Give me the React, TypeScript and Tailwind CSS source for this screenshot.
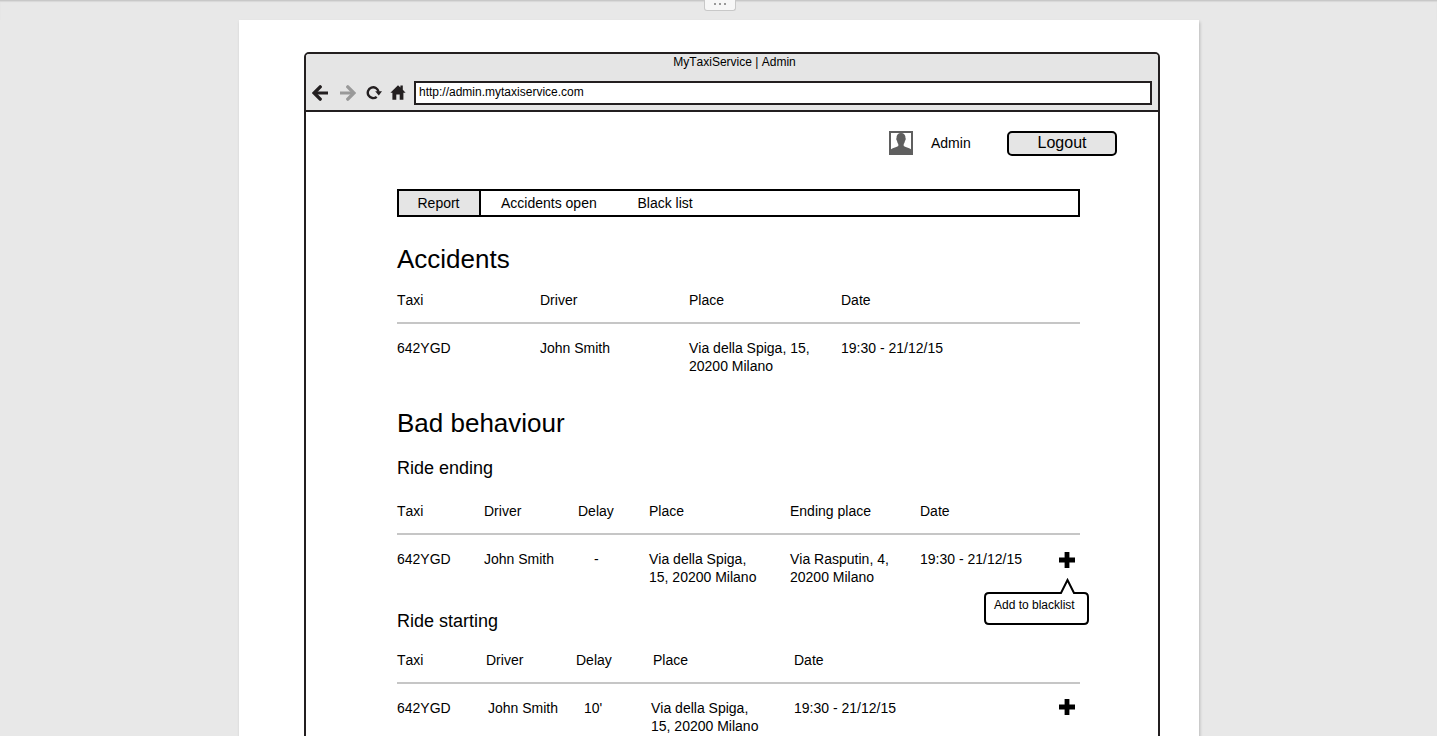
import React from "react";

function BackArrow({ className }: { className: string }) {
  return (
    <svg viewBox="0 0 16 16" className={className} fill="none" stroke="currentColor" strokeWidth="3">
      <path d="M2 8 H16" />
      <path d="M8.2 1.9 L2.1 8 L8.2 14.1" strokeWidth="3.4" strokeLinecap="round" />
    </svg>
  );
}

function Reload() {
  return (
    <svg viewBox="0 0 16 16" className="h-4 w-4 shrink-0" fill="none">
      <path d="M10.7 11.8 A5.4 5.4 0 1 1 12.5 6.8" stroke="#231f20" strokeWidth="2.4" />
      <path d="M9.2 6.3 H16 L12.8 10.6 Z" fill="#231f20" />
    </svg>
  );
}

function Home() {
  return (
    <svg viewBox="0 0 16 16" className="h-4 w-4 shrink-0" fill="#231f20">
      <path d="M8 0.2 L10.4 2.5 V0.6 H12.8 V4.8 L15.6 7.8 H13.4 V14.8 H9.7 V9.6 H6.3 V14.8 H2.4 V7.8 H0.4 Z" />
    </svg>
  );
}

function Avatar() {
  return (
    <svg viewBox="0 0 24 24" className="h-6 w-6 shrink-0">
      <rect x="1" y="1" width="22" height="22" fill="#fff" stroke="#5f5f5f" strokeWidth="2" />
      <path
        d="M12 2 C8.9 2 7.4 4 7.5 7 C7 7.4 7.3 9.4 8 9.8 C8.2 11.4 8.8 12.4 9.3 13 V15 C8 16.4 4 16.6 2 18.2 V23 H22 V18.2 C20 16.6 16 16.4 14.7 15 V13 C15.2 12.4 15.8 11.4 16 9.8 C16.7 9.4 17 7.4 16.5 7 C16.6 4 15.1 2 12 2 Z"
        fill="#5f5f5f"
      />
    </svg>
  );
}

function Plus() {
  return (
    <svg viewBox="0 0 16 16" className="block h-4 w-4" fill="#000">
      <path d="M5.6 0 H10.4 V5.6 H16 V10.4 H10.4 V16 H5.6 V10.4 H0 V5.6 H5.6 Z" />
    </svg>
  );
}

function Tooltip() {
  return (
    <div className="absolute top-7 left-[-75px] h-[47px] w-[105px]">
      <svg viewBox="0 0 105 47" className="absolute inset-0 h-full w-full" fill="#fff" stroke="#000" strokeWidth="2">
        <path d="M5 15 H77 L83.5 2 L90 15 H100 Q104 15 104 19 V42 Q104 46 100 46 H5 Q1 46 1 42 V19 Q1 15 5 15 Z" />
      </svg>
      <p className="relative pt-5 pl-2.5 text-xs leading-[14px] whitespace-nowrap">Add to blacklist</p>
    </div>
  );
}

export default function App() {
  return (
    <div
      className="flex h-[736px] w-full flex-col overflow-hidden bg-[#e8e8e8] text-sm leading-[18px] text-black [font-kerning:none]"
      style={{ fontFamily: '"Liberation Sans", Arial, sans-serif' }}
    >
      <div className="relative h-5 shrink-0 border-t border-[#c8c8c8] shadow-[inset_0_1px_1px_#d8d8d8]">
        <div className="absolute -top-px left-[704px] flex h-[11px] w-8 items-start justify-center gap-[3px] rounded-b-[3px] border border-t-0 border-[#c8c8c8] bg-[#f7f7f7] pt-[3px]">
          <span className="h-0.5 w-0.5 bg-[#999]" />
          <span className="h-0.5 w-0.5 bg-[#999]" />
          <span className="h-0.5 w-0.5 bg-[#999]" />
        </div>
      </div>
      <main className="ml-[239px] w-[960px] flex-1 bg-white pt-8 pl-[65px] shadow-[1px_2px_3px_rgba(0,0,0,0.2)]">
        <div className="h-[800px] w-[856px] rounded-t-[5px] border-2 border-[#231f20]">
          <header className="h-[58px] rounded-t-[3px] border-b-2 border-[#231f20] bg-[#e5e5e5]">
            <p className="h-[27px] pt-px pl-[5px] text-center text-xs leading-[14px]">MyTaxiService | Admin</p>
            <div className="flex items-center pl-1.5">
              <BackArrow className="h-4 w-4 shrink-0 text-[#231f20]" />
              <BackArrow className="ml-3 h-4 w-4 shrink-0 -scale-x-100 text-[#999]" />
              <span className="ml-[10px] flex"><Reload /></span>
              <span className="ml-2 flex"><Home /></span>
              <div className="ml-2 h-6 w-[738px] border-2 border-[#231f20] bg-white pt-0.5 pl-[3px] text-xs leading-[14px]">
                http://admin.mytaxiservice.com
              </div>
            </div>
          </header>

          <div className="flex pt-[19px] pl-[583px]">
            <Avatar />
            <span className="ml-[18px] w-[76px] pt-[3px]">Admin</span>
            <button className="flex h-[25px] w-[110px] justify-center rounded-[5px] border-2 border-black bg-[#e5e5e5] pt-px text-base leading-[18px]">
              Logout
            </button>
          </div>

          <div className="ml-[91px] w-[683px]">
            <nav className="mt-[33px] flex h-7 border-2 border-black">
              <span className="w-[82px] border-r-2 border-black bg-[#e5e5e5] pt-[3px] pr-px text-center">Report</span>
              <span className="w-[137px] pt-[3px] pl-5">Accidents open</span>
              <span className="pt-[3px] pl-[19.5px]">Black list</span>
            </nav>

            <h1 className="mt-[27px] text-[26px] leading-[30px]">Accidents</h1>
            <div className="mt-[17px] grid h-[33px] grid-cols-[143px_149px_152px_1fr] border-b-2 border-[#c6c6c6]">
              <span>Taxi</span>
              <span>Driver</span>
              <span>Place</span>
              <span>Date</span>
            </div>
            <div className="mt-[15px] grid h-9 grid-cols-[143px_149px_152px_1fr]">
              <span>642YGD</span>
              <span>John Smith</span>
              <span>Via della Spiga, 15,<br />20200 Milano</span>
              <span>19:30 - 21/12/15</span>
            </div>

            <h1 className="mt-[33px] text-[26px] leading-[30px]">Bad behaviour</h1>
            <h2 className="mt-5 text-lg leading-5">Ride ending</h2>
            <div className="mt-6 grid h-[33px] grid-cols-[87px_94px_71px_141px_130px_1fr] border-b-2 border-[#c6c6c6]">
              <span>Taxi</span>
              <span>Driver</span>
              <span>Delay</span>
              <span>Place</span>
              <span>Ending place</span>
              <span>Date</span>
            </div>
            <div className="mt-[15px] grid h-9 grid-cols-[87px_94px_71px_141px_130px_139px_1fr]">
              <span>642YGD</span>
              <span>John Smith</span>
              <span className="pl-4">-</span>
              <span>Via della Spiga,<br />15, 20200 Milano</span>
              <span>Via Rasputin, 4,<br />20200 Milano</span>
              <span>19:30 - 21/12/15</span>
              <div className="relative pt-0.5">
                <Plus />
                <Tooltip />
              </div>
            </div>

            <h2 className="mt-[25px] text-lg leading-5">Ride starting</h2>
            <div className="mt-5 grid h-[33px] grid-cols-[89px_90px_77px_141px_1fr] border-b-2 border-[#c6c6c6]">
              <span>Taxi</span>
              <span>Driver</span>
              <span>Delay</span>
              <span>Place</span>
              <span>Date</span>
            </div>
            <div className="mt-[15px] grid h-9 grid-cols-[91px_96px_67px_143px_265px_1fr]">
              <span>642YGD</span>
              <span>John Smith</span>
              <span>10'</span>
              <span>Via della Spiga,<br />15, 20200 Milano</span>
              <span>19:30 - 21/12/15</span>
              <div><Plus /></div>
            </div>
          </div>
        </div>
      </main>
    </div>
  );
}
